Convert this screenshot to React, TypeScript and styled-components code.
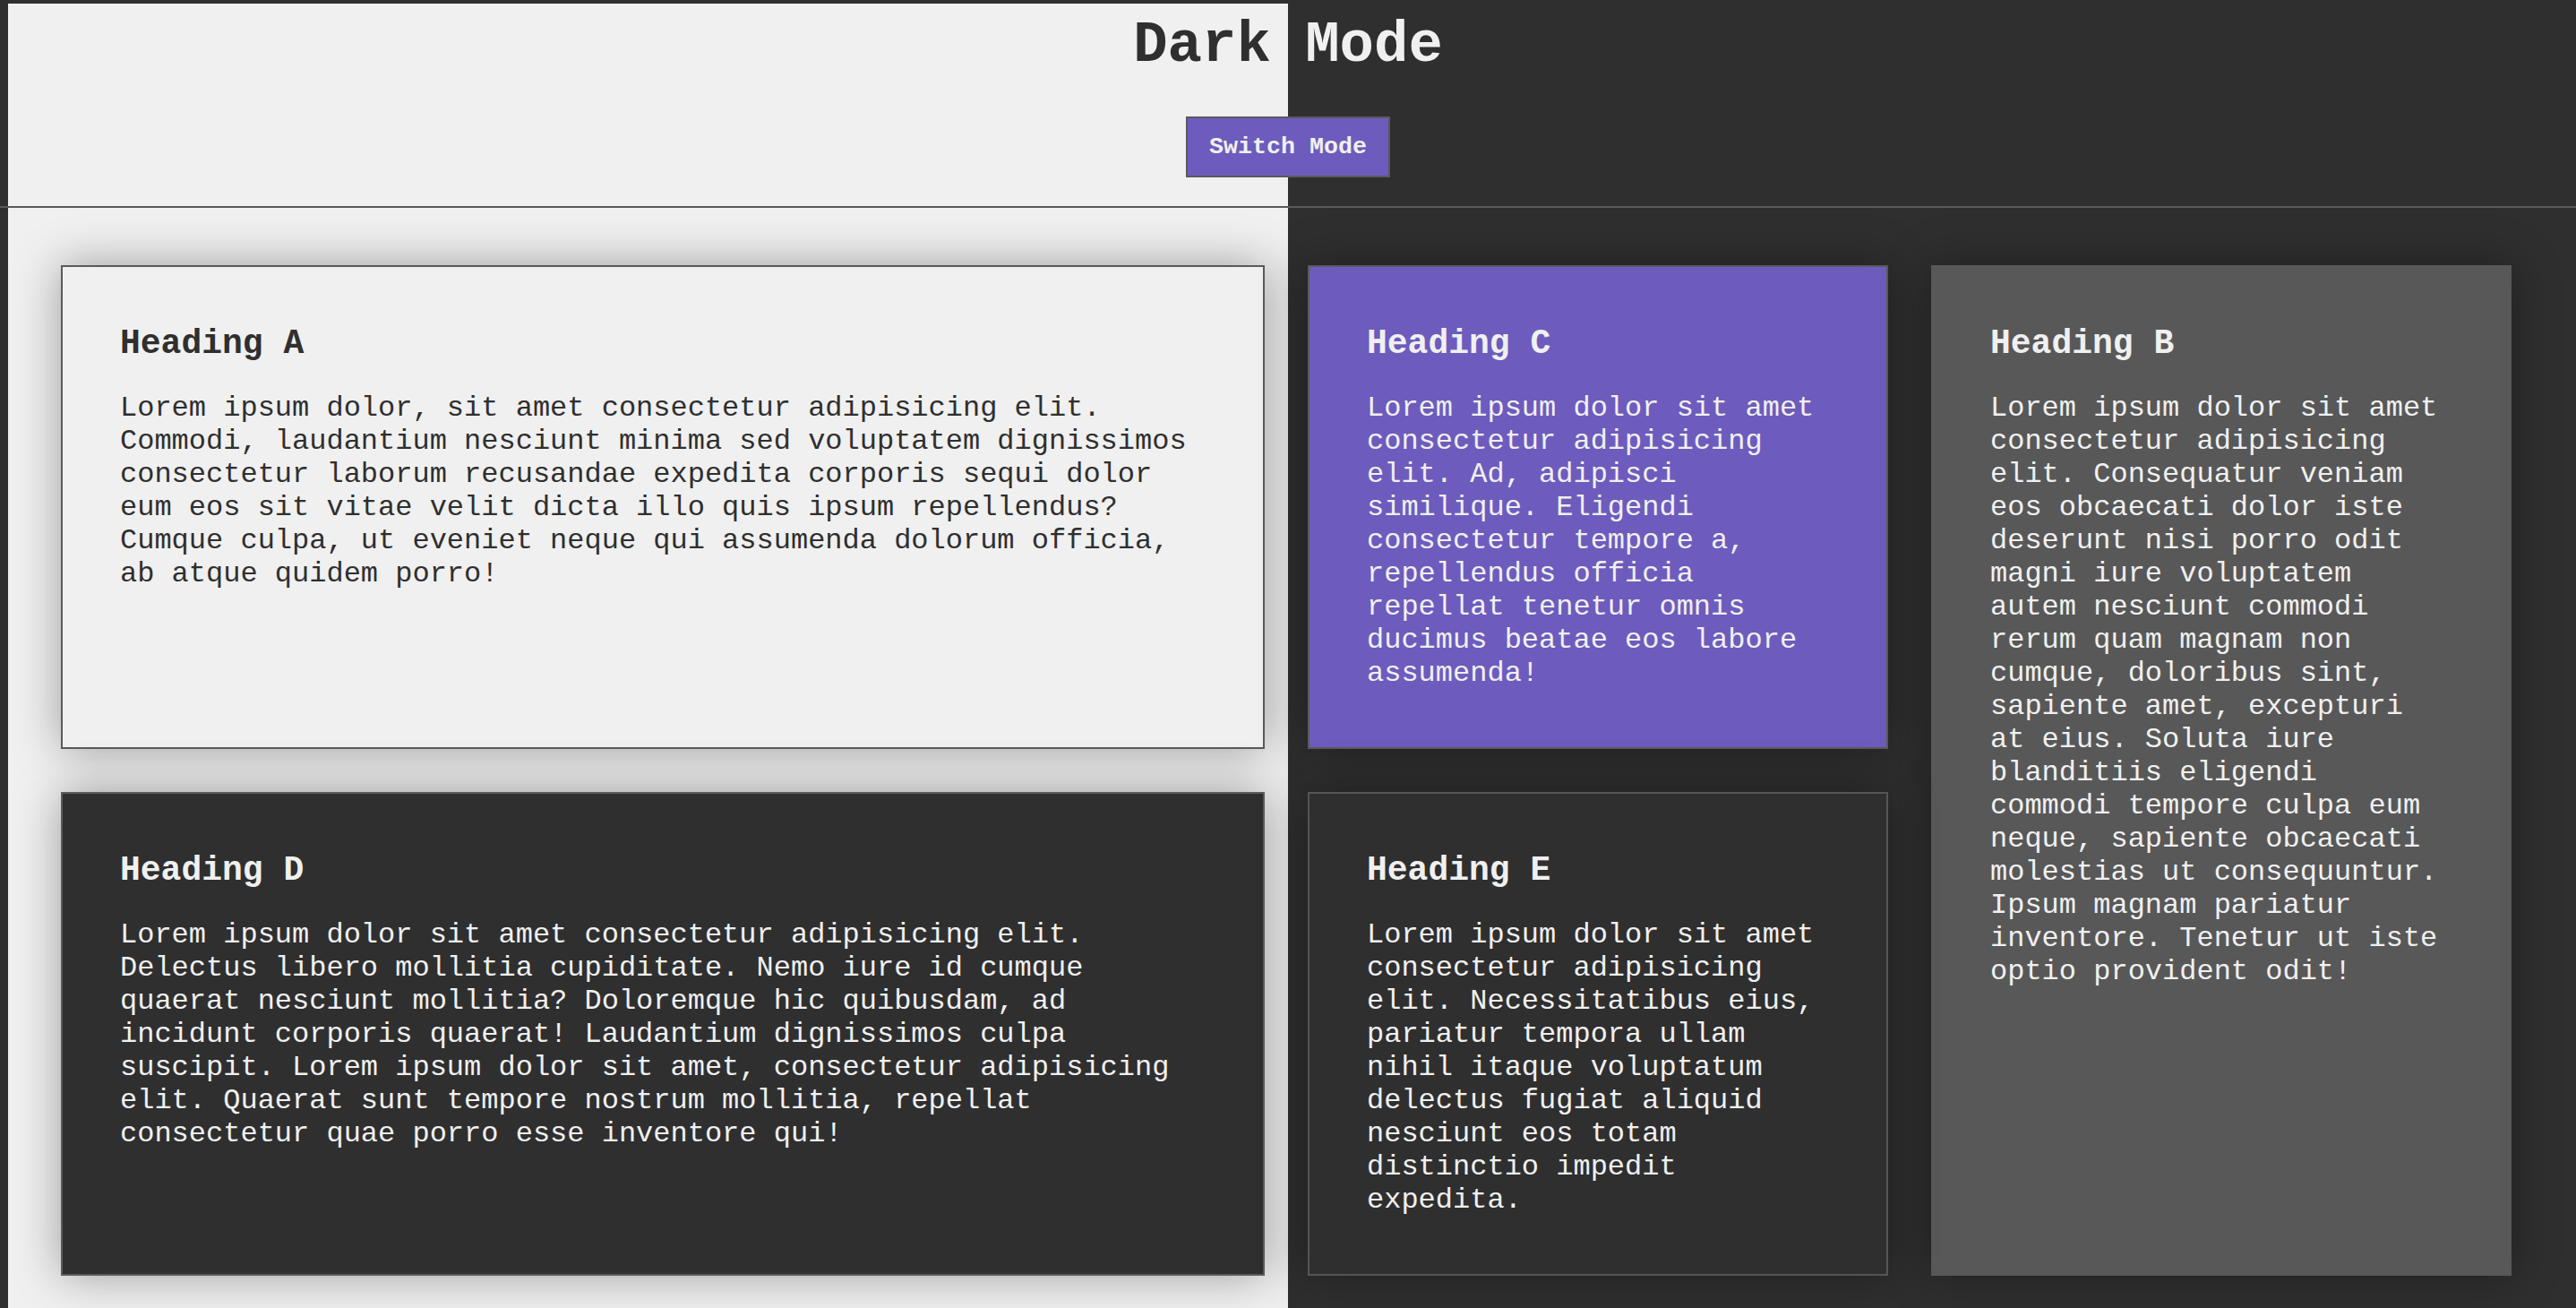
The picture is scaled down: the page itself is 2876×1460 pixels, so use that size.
import React from "react";
import styled, { createGlobalStyle } from "styled-components";

const LIGHT = "#f0f0f0";
const DARK = "#2f2f2f";
const LINE = "#5a5a5a";
const PURPLE = "#6d5cbd";
const GREY = "#585858";
const MONO = `"Courier New", "Nimbus Mono PS", "Nimbus Mono L", "FreeMono", "Liberation Mono", monospace`;

const GlobalStyle = createGlobalStyle`
  html, body {
    margin: 0;
    padding: 0;
    background: ${DARK};
  }
  body {
    font-family: ${MONO};
    font-size: 32px;
  }
  * { box-sizing: border-box; }
`;

const Page = styled.div`
  margin-top: 4px;
  min-height: calc(100vh - 4px);
  background: linear-gradient(
    90deg,
    ${DARK} 0 9px,
    ${LIGHT} 9px 50%,
    ${DARK} 50% 100%
  );
`;

const Header = styled.header`
  display: flex;
  flex-direction: column;
  align-items: center;
  padding: 11px 0 32px;
  border-bottom: 2px solid ${LINE};
`;

const Title = styled.h1`
  align-self: stretch;
  margin: 0 0 43px;
  font-size: 64px;
  font-weight: bold;
  line-height: normal;
  text-align: center;
  background: linear-gradient(90deg, ${DARK} 50%, ${LIGHT} 50%);
  -webkit-background-clip: text;
  background-clip: text;
  color: transparent;
`;

const SwitchButton = styled.button`
  font-family: ${MONO};
  font-size: 26.67px;
  font-weight: bold;
  line-height: normal;
  color: ${LIGHT};
  background: ${PURPLE};
  border: 2px solid ${LINE};
  padding: 17px 24px;
  cursor: pointer;
`;

const Grid = styled.main`
  display: grid;
  grid-template-columns: repeat(4, 1fr);
  grid-template-rows: 540px 540px;
  gap: 48px;
  padding: 64px 72px 64px 68px;
`;

type Tone = "light" | "purple" | "grey" | "dark" | "darkSoft";

const tones: Record<Tone, { bg: string; fg: string; border: string }> = {
  light: { bg: LIGHT, fg: DARK, border: LINE },
  purple: { bg: PURPLE, fg: LIGHT, border: LINE },
  grey: { bg: GREY, fg: LIGHT, border: GREY },
  dark: { bg: DARK, fg: LIGHT, border: LINE },
  darkSoft: { bg: DARK, fg: LIGHT, border: "#555555" },
};

const Card = styled.article<{ $tone: Tone; $col: string; $row: string }>`
  grid-column: ${(p) => p.$col};
  grid-row: ${(p) => p.$row};
  background: ${(p) => tones[p.$tone].bg};
  color: ${(p) => tones[p.$tone].fg};
  border: 2px solid ${(p) => tones[p.$tone].border};
  box-shadow: 0 0 48px rgba(0, 0, 0, 0.35);
  padding: 64px;
`;

const CardTitle = styled.h3`
  margin: 0 0 32px;
  font-size: 38px;
  font-weight: bold;
  line-height: normal;
`;

const CardText = styled.p`
  margin: 0;
  font-size: 32px;
  line-height: normal;
`;

const cards: {
  title: string;
  tone: Tone;
  col: string;
  row: string;
  text: string;
}[] = [
  {
    title: "Heading A",
    tone: "light",
    col: "1 / span 2",
    row: "1",
    text: "Lorem ipsum dolor, sit amet consectetur adipisicing elit. Commodi, laudantium nesciunt minima sed voluptatem dignissimos consectetur laborum recusandae expedita corporis sequi dolor eum eos sit vitae velit dicta illo quis ipsum repellendus? Cumque culpa, ut eveniet neque qui assumenda dolorum officia, ab atque quidem porro!",
  },
  {
    title: "Heading C",
    tone: "purple",
    col: "3",
    row: "1",
    text: "Lorem ipsum dolor sit amet consectetur adipisicing elit. Ad, adipisci similique. Eligendi consectetur tempore a, repellendus officia repellat tenetur omnis ducimus beatae eos labore assumenda!",
  },
  {
    title: "Heading B",
    tone: "grey",
    col: "4",
    row: "1 / span 2",
    text: "Lorem ipsum dolor sit amet consectetur adipisicing elit. Consequatur veniam eos obcaecati dolor iste deserunt nisi porro odit magni iure voluptatem autem nesciunt commodi rerum quam magnam non cumque, doloribus sint, sapiente amet, excepturi at eius. Soluta iure blanditiis eligendi commodi tempore culpa eum neque, sapiente obcaecati molestias ut consequuntur. Ipsum magnam pariatur inventore. Tenetur ut iste optio provident odit!",
  },
  {
    title: "Heading D",
    tone: "dark",
    col: "1 / span 2",
    row: "2",
    text: "Lorem ipsum dolor sit amet consectetur adipisicing elit. Delectus libero mollitia cupiditate. Nemo iure id cumque quaerat nesciunt mollitia? Doloremque hic quibusdam, ad incidunt corporis quaerat! Laudantium dignissimos culpa suscipit. Lorem ipsum dolor sit amet, consectetur adipisicing elit. Quaerat sunt tempore nostrum mollitia, repellat consectetur quae porro esse inventore qui!",
  },
  {
    title: "Heading E",
    tone: "darkSoft",
    col: "3",
    row: "2",
    text: "Lorem ipsum dolor sit amet consectetur adipisicing elit. Necessitatibus eius, pariatur tempora ullam nihil itaque voluptatum delectus fugiat aliquid nesciunt eos totam distinctio impedit expedita.",
  },
];

export default function App() {
  return (
    <>
      <GlobalStyle />
      <Page>
        <Header>
          <Title>Dark Mode</Title>
          <SwitchButton type="button">Switch Mode</SwitchButton>
        </Header>
        <Grid>
          {cards.map((c) => (
            <Card key={c.title} $tone={c.tone} $col={c.col} $row={c.row}>
              <CardTitle>{c.title}</CardTitle>
              <CardText>{c.text}</CardText>
            </Card>
          ))}
        </Grid>
      </Page>
    </>
  );
}
